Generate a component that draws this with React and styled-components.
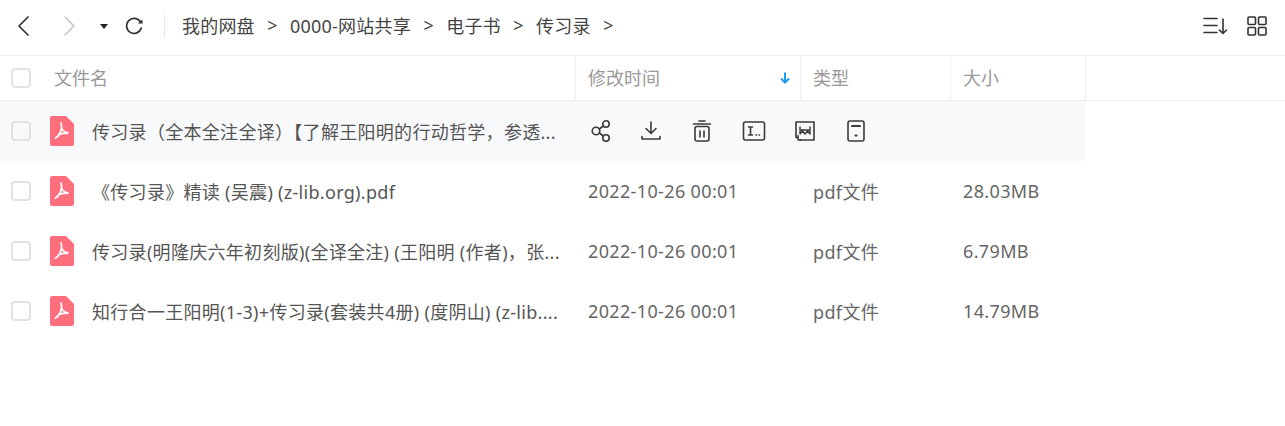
import styled, { createGlobalStyle } from "styled-components";

const GlobalStyle = createGlobalStyle`
  html, body {
    margin: 0;
    padding: 0;
    background: #fff;
    font-family: "Noto Sans", "Noto Sans CJK SC", sans-serif;
  }
`;

const files = [
  { name: "传习录（全本全注全译）【了解王阳明的行动哲学，参透...", time: "", type: "", size: "", hover: true },
  { name: "《传习录》精读 (吴震) (z-lib.org).pdf", time: "2022-10-26 00:01", type: "pdf文件", size: "28.03MB" },
  { name: "传习录(明隆庆六年初刻版)(全译全注) (王阳明 (作者)，张...", time: "2022-10-26 00:01", type: "pdf文件", size: "6.79MB" },
  { name: "知行合一王阳明(1-3)+传习录(套装共4册) (度阴山) (z-lib....", time: "2022-10-26 00:01", type: "pdf文件", size: "14.79MB" },
];

const crumbs = ["我的网盘", "0000-网站共享", "电子书", "传习录"];

function Icon({ size = 24, children }) {
  return (
    <svg width={size} height={size} viewBox="0 0 24 24" fill="none" stroke="#3a3a3a" strokeWidth="1.6" strokeLinecap="round" strokeLinejoin="round">
      {children}
    </svg>
  );
}

function PdfIcon() {
  return (
    <FileIcon width="24" height="30" viewBox="0 0 24 30">
      <path d="M2 0H16L24 8V28a2 2 0 0 1-2 2H2a2 2 0 0 1-2-2V2a2 2 0 0 1 2-2Z" fill="#ff6e7c" />
      <path d="M11 7c1 3 1 6-1 10-1 2-2.500 4-4.500 5M11.500 12c1 2.500 3 4.500 7 5-3 0-7 .5-9.500 1.500" fill="none" stroke="#fff" strokeWidth="1.800" strokeLinecap="round" />
    </FileIcon>
  );
}

function RowActions() {
  return (
    <Actions>
      <Icon>
        <circle cx="8" cy="12" r="3.800" />
        <circle cx="18" cy="5" r="3.200" />
        <circle cx="18" cy="19" r="3.200" />
        <path d="M11.200 10 15.500 7M11.200 14 15.500 17" />
      </Icon>
      <Icon>
        <path d="M12 3v11M7 9.500l5 5 5-5M3 17.500V20h18v-2.500" />
      </Icon>
      <Icon>
        <rect x="5" y="7.500" width="14" height="14.500" rx="2" />
        <path d="M3.500 5h17M9 2h6M10 12v6M14 12v6" />
      </Icon>
      <Icon>
        <rect x="1.500" y="3" width="21" height="18" rx="2" />
        <path d="M6.500 8h4M8.500 8v8M6.500 16h4M14 16h.5M17 16h.5" />
      </Icon>
      <Icon>
        <path d="M5 18.500H3V3h18v18H7" />
        <path d="M5 16.500v4.500h3M7 8v7l2.500-3 2.500 3 2.500-3 2.500 3V8M7 11h10" strokeWidth="1.400" />
      </Icon>
      <Icon>
        <rect x="4" y="2" width="16" height="20" rx="2" />
        <path d="M8 7h8M11.500 16.500h1" strokeWidth="2" />
      </Icon>
    </Actions>
  );
}

export default function App() {
  return (
    <>
      <GlobalStyle />
      <Page>
        <Toolbar>
          <NavGroup>
            <svg width="16" height="22" viewBox="0 0 16 22" fill="none" stroke="#333" strokeWidth="1.700" strokeLinecap="round" strokeLinejoin="round">
              <path d="M12 2 3 11l9 9" />
            </svg>
            <ForwardArrow width="16" height="22" viewBox="0 0 16 22" fill="none" stroke="#c4c4c4" strokeWidth="1.500" strokeLinecap="round" strokeLinejoin="round">
              <path d="m4 2 9 9-9 9" />
            </ForwardArrow>
            <DropArrow />
            <svg width="20" height="20" viewBox="0 0 20 20" fill="none" stroke="#333" strokeWidth="1.700" strokeLinecap="round">
              <path d="M16.500 6A7.500 7.500 0 1 0 17.300 12" />
              <path d="M18.800 7.500H13.800L18.300 3.500Z" fill="#333" stroke="none" />
            </svg>
          </NavGroup>
          <Divider />
          <Breadcrumbs>
            {crumbs.map((c) => (
              <Crumb key={c}>
                {c}
                <Sep>&gt;</Sep>
              </Crumb>
            ))}
          </Breadcrumbs>
          <ViewTools>
            <svg width="26" height="22" viewBox="0 0 26 22" fill="none" stroke="#333" strokeWidth="1.600" strokeLinecap="round" strokeLinejoin="round">
              <path d="M1 3.500h13M1 10.500h13M1 17.500h13M20 4v14M16.500 15l3.500 3.500 3.500-3.500" />
            </svg>
            <svg width="20" height="20" viewBox="0 0 20 20" fill="none" stroke="#333" strokeWidth="1.600">
              <rect x="1" y="1" width="7.500" height="7.500" rx="1" />
              <rect x="11.500" y="1" width="7.500" height="7.500" rx="1" />
              <rect x="1" y="11.500" width="7.500" height="7.500" rx="1" />
              <rect x="11.500" y="11.500" width="7.500" height="7.500" rx="1" />
            </svg>
          </ViewTools>
        </Toolbar>

        <HeaderRow>
          <NameHead>
            <Checkbox />
            <HeadLabel>文件名</HeadLabel>
          </NameHead>
          <HeadCell>
            <HeadLabel>修改时间</HeadLabel>
            <svg width="12" height="14" viewBox="0 0 12 14" fill="none" stroke="#1a9cf0" strokeWidth="2">
              <path d="M6 1.500v10M2 7.500l4 4 4-4" />
            </svg>
          </HeadCell>
          <HeadCell>
            <HeadLabel>类型</HeadLabel>
          </HeadCell>
          <HeadCell>
            <HeadLabel>大小</HeadLabel>
          </HeadCell>
        </HeaderRow>

        {files.map((f) => (
          <FileRow key={f.name} $hover={f.hover}>
            <NameCell>
              <Checkbox />
              <PdfIcon />
              <FileName>{f.name}</FileName>
            </NameCell>
            {f.hover ? (
              <RowActions />
            ) : (
              <>
                <TextCell>{f.time}</TextCell>
                <TextCell>{f.type}</TextCell>
                <TextCell>{f.size}</TextCell>
              </>
            )}
          </FileRow>
        ))}
      </Page>
    </>
  );
}

const Page = styled.div`
  width: 1285px;
  height: 426px;
  overflow: hidden;
  background: #fff;
  color: #555;
  font-size: 18px;
`;

const Toolbar = styled.div`
  display: flex;
  align-items: center;
  box-sizing: border-box;
  height: 56px;
  padding: 0 18px 3px 16px;
  border-bottom: 1px solid #eee;
`;

const NavGroup = styled.div`
  display: flex;
  align-items: center;
`;

const ForwardArrow = styled.svg`
  margin-left: 29px;
`;

const DropArrow = styled.span`
  width: 0;
  height: 0;
  margin: 0 16px 0 23px;
  border-left: 4px solid transparent;
  border-right: 4px solid transparent;
  border-top: 5px solid #222;
`;

const Divider = styled.span`
  width: 1px;
  height: 24px;
  margin: 0 17px 0 20px;
  background: #e8e8e8;
`;

const Breadcrumbs = styled.div`
  display: flex;
  flex: 1;
  padding-bottom: 2px;
  color: #444;
`;

const Crumb = styled.span`
  display: flex;
  align-items: center;
  white-space: nowrap;
  letter-spacing: 0.2px;
`;

const Sep = styled.span`
  margin: 0 12.500px;
  letter-spacing: 0;
`;

const ViewTools = styled.div`
  display: flex;
  align-items: center;
  gap: 18px;
`;

const HeaderRow = styled.div`
  display: grid;
  box-sizing: border-box;
  grid-template-columns: 576px 225px 150px 135px;
  height: 45px;
  border-bottom: 1px solid #eee;
`;

const HeadCell = styled.div`
  display: flex;
  align-items: center;
  justify-content: space-between;
  padding: 0 9px 0 12px;
  border-right: 1px solid #eee;
`;

const NameHead = styled(HeadCell)`
  justify-content: flex-start;
  gap: 23px;
  padding-left: 11px;
`;

const HeadLabel = styled.span`
  margin-bottom: 2px;
  color: #999;
`;

const Checkbox = styled.span`
  flex: none;
  width: 16px;
  height: 16px;
  border: 2px solid #e2e2e2;
  border-radius: 4px;
`;

const FileRow = styled.div`
  display: grid;
  grid-template-columns: 576px 225px 150px 134px;
  align-items: center;
  width: 1085px;
  height: 60px;
  background: ${(p) => (p.$hover ? "#f8f9fb" : "#fff")};
`;

const NameCell = styled.div`
  display: flex;
  align-items: center;
  padding-left: 11px;
`;

const FileIcon = styled.svg`
  flex: none;
  margin-left: 19px;
`;

const FileName = styled.span`
  margin-left: 18px;
  white-space: nowrap;
  color: #555;
  letter-spacing: 0.3px;
`;

const TextCell = styled.span`
  padding-left: 12px;
  color: #666;
  letter-spacing: 0.36px;
`;

const Actions = styled.div`
  display: flex;
  align-items: center;
  gap: 27.200px;
  padding-left: 12px;
  grid-column: span 3;
`;
